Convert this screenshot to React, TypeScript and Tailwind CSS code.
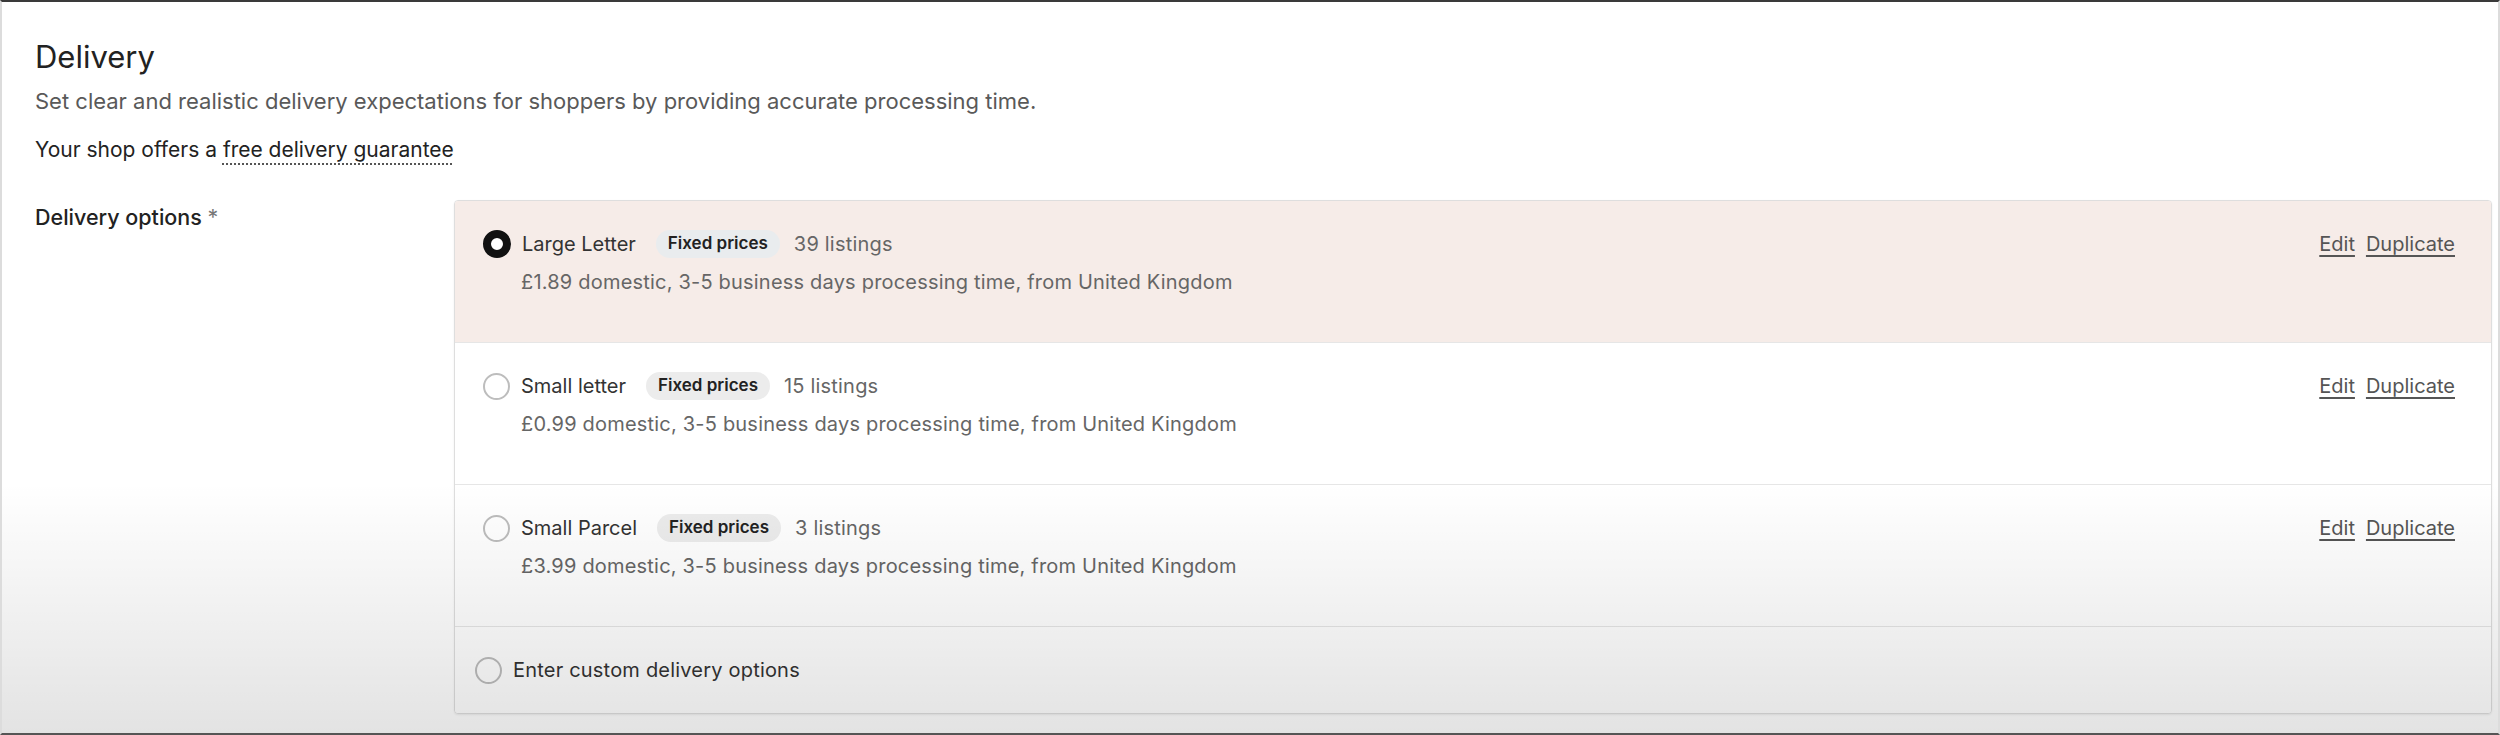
const options = [
  { name: "Large Letter", listings: "39 listings", price: "£1.89", selected: true },
  { name: "Small letter", listings: "15 listings", price: "£0.99", selected: false },
  { name: "Small Parcel", listings: "3 listings", price: "£3.99", selected: false },
];

function Radio({ checked }: { checked: boolean }) {
  return checked ? (
    <span className="h-[28px] w-[28px] shrink-0 rounded-full border-[8px] border-[#111] bg-white" />
  ) : (
    <span className="h-[27px] w-[27px] shrink-0 rounded-full border-2 border-[#bdbdbd] bg-white" />
  );
}

export default function App() {
  return (
    <div
      className="relative h-screen w-full overflow-hidden border-x-2 border-t-2 border-b-2 border-x-[#dcdcdc] border-t-[#3a3a3a] border-b-[#555] bg-white text-[#222]"
      style={{ fontFamily: "Inter, 'Noto Sans', sans-serif" }}
    >
      <div className="pl-[33px] pr-[6px] pt-[35px]">
        <h1 className="text-[31px] leading-[40px] font-normal">Delivery</h1>
        <p className="mt-[9px] text-[22px] leading-[30px] text-[#595959]">
          Set clear and realistic delivery expectations for shoppers by providing accurate processing time.
        </p>
        <p className="mt-[19px] text-[21px] leading-[30px]">
          Your shop offers a{" "}
          <span className="underline decoration-dotted decoration-[#555] decoration-2 underline-offset-[6px]">
            free delivery guarantee
          </span>
        </p>

        <div className="mt-[35px] flex">
          <div className="w-[419px] shrink-0 pt-[3px] text-[21.5px] leading-[28px] font-medium">
            Delivery options <span className="text-[#777] font-normal">*</span>
          </div>

          <div className="flex-1 overflow-hidden rounded-[4px] border border-[#dedede] shadow-[0_1px_2px_rgba(0,0,0,0.08)]">
            {options.map((o) => (
              <div
                key={o.name}
                className={
                  "flex h-[142px] items-start justify-between border-b border-[#e6e6e6] pl-[28px] pr-[36px] pt-[28px] " +
                  (o.selected ? "bg-[#f6ece8]" : "bg-white")
                }
              >
                <div>
                  <div className="flex h-[30px] items-center">
                    <Radio checked={o.selected} />
                    <span className="ml-[11px] text-[20px] text-[#333]">{o.name}</span>
                    <span
                      className={
                        "ml-[20px] rounded-full px-[12px] py-[1px] text-[17px] font-semibold text-[#222] " +
                        (o.selected ? "bg-[#e9ecee]" : "bg-[#ececec]")
                      }
                    >
                      Fixed prices
                    </span>
                    <span className="ml-[14px] text-[20px] tracking-[0.2px] text-[#666]">{o.listings}</span>
                  </div>
                  <div className="ml-[38px] mt-[8px] text-[20px] leading-[30px] tracking-[0.2px] text-[#666]">
                    {o.price} domestic, 3-5 business days processing time, from United Kingdom
                  </div>
                </div>
                <div className="flex h-[30px] items-center gap-[11px] text-[20px] text-[#555]">
                  <a href="#" className="underline underline-offset-[4px]">Edit</a>
                  <a href="#" className="underline underline-offset-[4px]">Duplicate</a>
                </div>
              </div>
            ))}
            <div className="flex h-[86px] items-center bg-white pl-[20px]">
              <Radio checked={false} />
              <span className="ml-[11px] text-[20px] tracking-[0.2px] text-[#333]">Enter custom delivery options</span>
            </div>
          </div>
        </div>
      </div>

      {/* video-style dimming toward the bottom edge */}
      <div className="pointer-events-none absolute inset-x-0 bottom-0 h-[250px] bg-gradient-to-b from-black/0 to-black/[0.11]" />
    </div>
  );
}
